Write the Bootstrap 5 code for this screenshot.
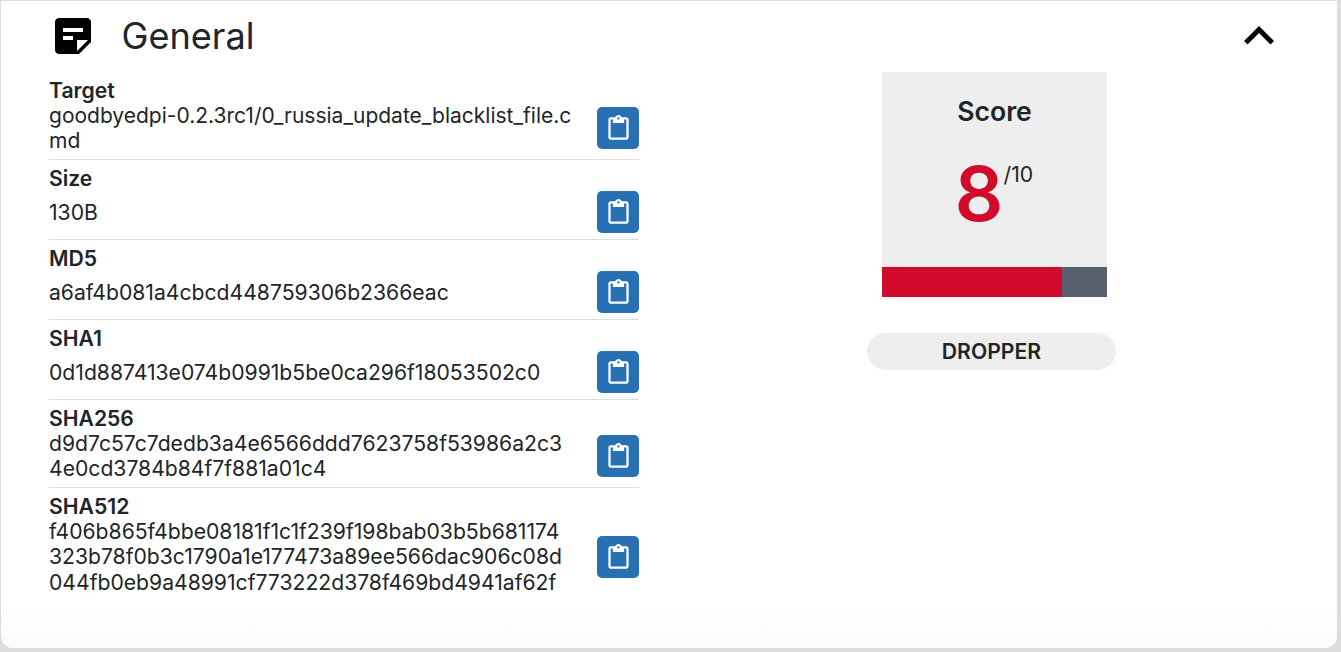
<!DOCTYPE html>
<html lang="en">
<head>
<meta charset="utf-8">
<title>General</title>
<link href="https://cdn.jsdelivr.net/npm/bootstrap@5.3.0/dist/css/bootstrap.min.css" rel="stylesheet">
<style>
html,body{height:652px;overflow:hidden}
body{background:#ddd;font-family:Inter,"Liberation Sans",sans-serif;color:#212529;padding:1px 4px 4px 1px}
.sheet{height:647px;background:linear-gradient(#fff 600px,#fbfbfb 100%);border-radius:0 0 12px 12px;padding:0 48px}
.sheet-head{height:71px}
.sheet-head svg{margin-bottom:1px}
.sheet-head svg.note{margin-right:24.500px}
.sheet-title{font-size:36.100px;font-weight:400;line-height:1;margin:0;padding-bottom:1px}
.info-col{width:590px}
.info-row{border-bottom:1px solid #ddd;font-size:21.150px;line-height:25.440px;padding:5.900px 0 5.280px}
.info-row:last-child{border-bottom:0}
.info-label{font-weight:600;margin-bottom:-.62px}
.info-row:last-child .info-label{margin-bottom:0}
.info-body{min-height:43px}
.info-text{width:520px;word-break:break-all}
.info-long{font-size:21px;width:523.500px}
.info-one{margin-top:2px}
.copy-btn{width:42px;height:42px;background:#2771b3;border:0;border-radius:5px;padding:0}
.score-col{margin-left:228px;width:249px}
.score-box{width:225px;height:195px;background:#eee;margin-left:15px}
.score-title{font-size:26.600px;font-weight:600;line-height:30px;padding-top:24px}
.score-main{margin-top:29px}
.score-num{color:#d00b2c;font-size:76px;font-weight:600;line-height:1}
.score-max{font-size:21.200px;line-height:24px;padding-top:7px;margin-right:1px}
.score-bar{height:30px;width:225px;background:#585f6c;margin-left:15px}
.score-fill{width:180px;background:#d00b2c}
.tag-pill{margin-top:36px;width:249px;height:37px;background:#eee;border-radius:19px;font-weight:600;font-size:21.200px}
</style>
</head>
<body>
<div class="sheet">
  <div class="sheet-head d-flex align-items-center">
    <svg class="note" width="48" height="48" viewBox="0 0 24 24"><path fill="#000" d="M19 3H4.990C3.890 3 3 3.900 3 5l.01 14c0 1.100.89 2 1.990 2h10l6-6V5c0-1.100-.9-2-2-2zM7 8h10v2H7V8zm5 6H7v-2h5v2zm2 5.500V14h5.500L14 19.500z"/></svg>
    <h1 class="sheet-title flex-grow-1">General</h1>
    <svg width="60" height="60" viewBox="0 0 24 24"><path fill="#000" d="M12 8l-6 6 1.410 1.410L12 10.830l4.590 4.580L18 14z"/></svg>
  </div>
  <div class="d-flex">
    <div class="info-col">
      <div class="info-row"><div class="info-label">Target</div><div class="info-body d-flex align-items-center justify-content-between"><div class="info-text info-long">goodbyedpi-0.2.3rc1/0_russia_update_blacklist_file.cmd</div><button class="copy-btn" type="button" aria-label="Copy"><svg width="27" height="27" viewBox="0 0 24 24"><path fill="#fff" d="M19 2h-4.180C14.400.84 13.300 0 12 0S9.600.84 9.180 2H5c-1.100 0-2 .9-2 2v16c0 1.100.9 2 2 2h14c1.100 0 2-.9 2-2V4c0-1.100-.9-2-2-2zm-7 0c.55 0 1 .45 1 1s-.45 1-1 1-1-.45-1-1 .45-1 1-1zm7 18H5V4h2v3h10V4h2v16z"/></svg></button></div></div>
      <div class="info-row"><div class="info-label">Size</div><div class="info-body d-flex align-items-center justify-content-between"><div class="info-text info-one">130B</div><button class="copy-btn" type="button" aria-label="Copy"><svg width="27" height="27" viewBox="0 0 24 24"><path fill="#fff" d="M19 2h-4.180C14.400.84 13.300 0 12 0S9.600.84 9.180 2H5c-1.100 0-2 .9-2 2v16c0 1.100.9 2 2 2h14c1.100 0 2-.9 2-2V4c0-1.100-.9-2-2-2zm-7 0c.55 0 1 .45 1 1s-.45 1-1 1-1-.45-1-1 .45-1 1-1zm7 18H5V4h2v3h10V4h2v16z"/></svg></button></div></div>
      <div class="info-row"><div class="info-label">MD5</div><div class="info-body d-flex align-items-center justify-content-between"><div class="info-text info-one">a6af4b081a4cbcd448759306b2366eac</div><button class="copy-btn" type="button" aria-label="Copy"><svg width="27" height="27" viewBox="0 0 24 24"><path fill="#fff" d="M19 2h-4.180C14.400.84 13.300 0 12 0S9.600.84 9.180 2H5c-1.100 0-2 .9-2 2v16c0 1.100.9 2 2 2h14c1.100 0 2-.9 2-2V4c0-1.100-.9-2-2-2zm-7 0c.55 0 1 .45 1 1s-.45 1-1 1-1-.45-1-1 .45-1 1-1zm7 18H5V4h2v3h10V4h2v16z"/></svg></button></div></div>
      <div class="info-row"><div class="info-label">SHA1</div><div class="info-body d-flex align-items-center justify-content-between"><div class="info-text info-one">0d1d887413e074b0991b5be0ca296f18053502c0</div><button class="copy-btn" type="button" aria-label="Copy"><svg width="27" height="27" viewBox="0 0 24 24"><path fill="#fff" d="M19 2h-4.180C14.400.84 13.300 0 12 0S9.600.84 9.180 2H5c-1.100 0-2 .9-2 2v16c0 1.100.9 2 2 2h14c1.100 0 2-.9 2-2V4c0-1.100-.9-2-2-2zm-7 0c.55 0 1 .45 1 1s-.45 1-1 1-1-.45-1-1 .45-1 1-1zm7 18H5V4h2v3h10V4h2v16z"/></svg></button></div></div>
      <div class="info-row"><div class="info-label">SHA256</div><div class="info-body d-flex align-items-center justify-content-between"><div class="info-text">d9d7c57c7dedb3a4e6566ddd7623758f53986a2c34e0cd3784b84f7f881a01c4</div><button class="copy-btn" type="button" aria-label="Copy"><svg width="27" height="27" viewBox="0 0 24 24"><path fill="#fff" d="M19 2h-4.180C14.400.84 13.300 0 12 0S9.600.84 9.180 2H5c-1.100 0-2 .9-2 2v16c0 1.100.9 2 2 2h14c1.100 0 2-.9 2-2V4c0-1.100-.9-2-2-2zm-7 0c.55 0 1 .45 1 1s-.45 1-1 1-1-.45-1-1 .45-1 1-1zm7 18H5V4h2v3h10V4h2v16z"/></svg></button></div></div>
      <div class="info-row"><div class="info-label">SHA512</div><div class="info-body d-flex align-items-center justify-content-between"><div class="info-text">f406b865f4bbe08181f1c1f239f198bab03b5b681174323b78f0b3c1790a1e177473a89ee566dac906c08d044fb0eb9a48991cf773222d378f469bd4941af62f</div><button class="copy-btn" type="button" aria-label="Copy"><svg width="27" height="27" viewBox="0 0 24 24"><path fill="#fff" d="M19 2h-4.180C14.400.84 13.300 0 12 0S9.600.84 9.180 2H5c-1.100 0-2 .9-2 2v16c0 1.100.9 2 2 2h14c1.100 0 2-.9 2-2V4c0-1.100-.9-2-2-2zm-7 0c.55 0 1 .45 1 1s-.45 1-1 1-1-.45-1-1 .45-1 1-1zm7 18H5V4h2v3h10V4h2v16z"/></svg></button></div></div>
    </div>
    <div class="score-col">
      <div class="score-box text-center">
        <div class="score-title">Score</div>
        <div class="d-flex justify-content-center score-main"><span class="score-num">8</span><span class="score-max">/10</span></div>
      </div>
      <div class="score-bar d-flex"><div class="score-fill"></div></div>
      <div class="tag-pill d-flex align-items-center justify-content-center">DROPPER</div>
    </div>
  </div>
</div>
</body>
</html>
